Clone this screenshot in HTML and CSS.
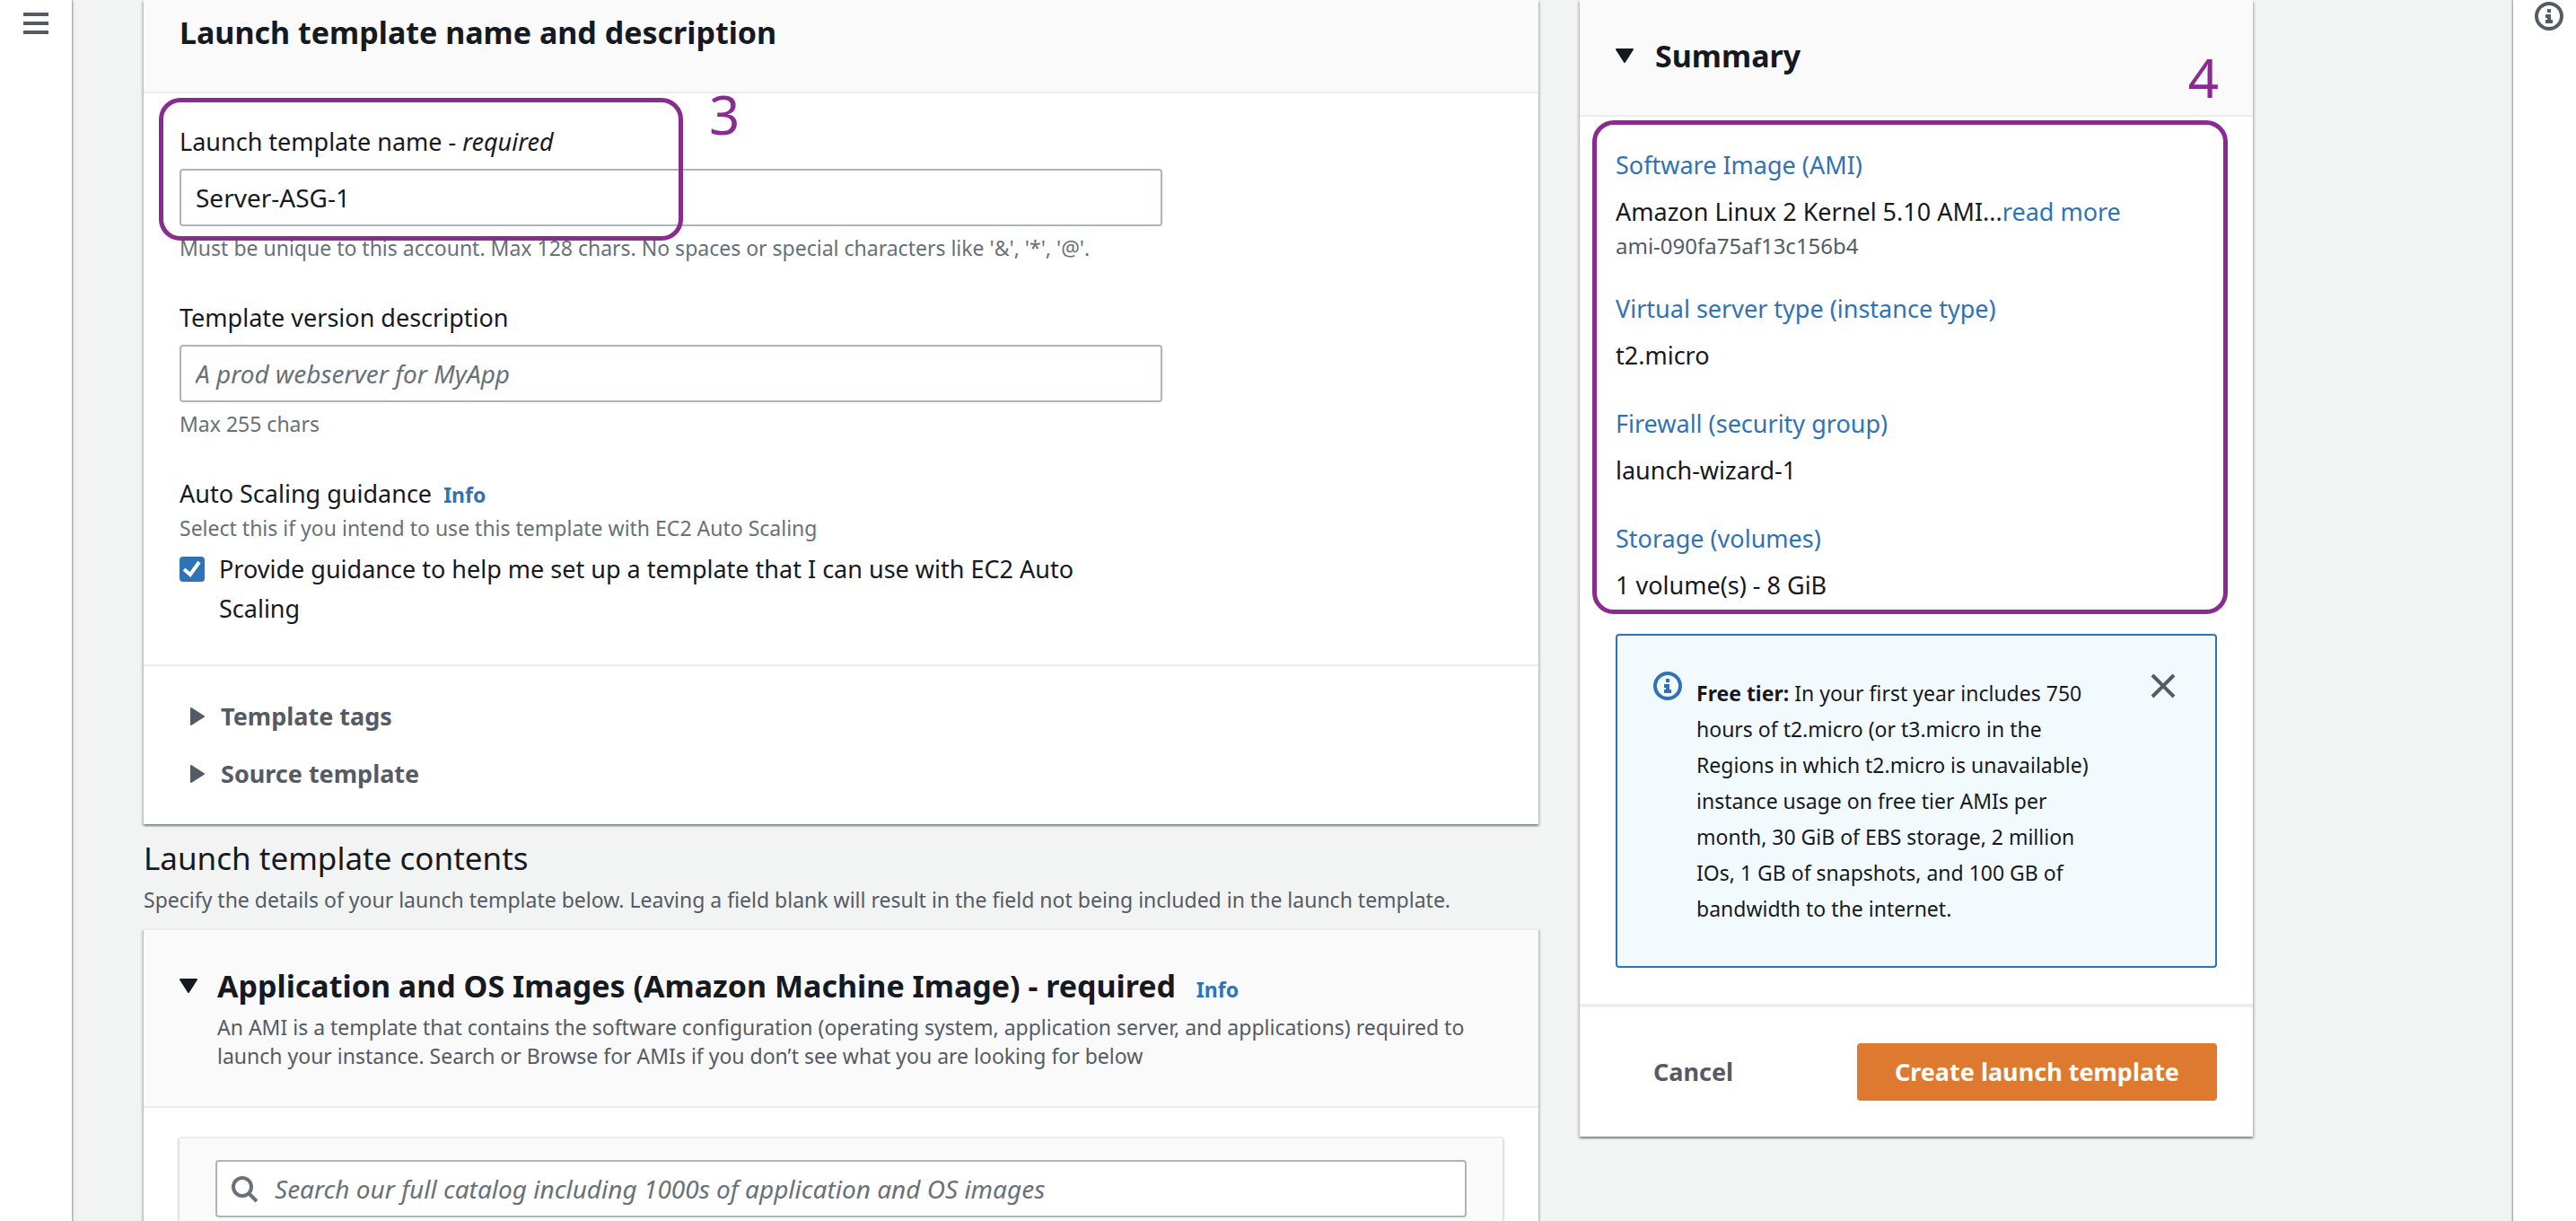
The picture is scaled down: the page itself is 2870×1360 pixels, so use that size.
FILE: index.html
```html
<!DOCTYPE html>
<html lang="en">
<head>
<meta charset="utf-8">
<title>Create launch template</title>
<link rel="stylesheet" href="styles.css">
</head>
<body>
<div class="app">
  <nav class="rail rail-left" aria-label="Navigation">
    <button class="icon-button menu-button" type="button" aria-label="Open navigation">
      <svg width="28" height="24" viewBox="0 0 28 24"><path d="M0 2h28M0 12h28M0 22h28" fill="none" stroke="#545b64" stroke-width="4"/></svg>
    </button>
  </nav>

  <main class="content">
    <div class="column">
      <section class="card card-top name-card">
        <header class="card-header card-header-scrolled">
          <h2 class="title">Launch template name and description</h2>
        </header>
        <div class="card-body form">
          <div class="field">
            <label class="label" for="template-name">Launch template name - <em>required</em></label>
            <input class="input" id="template-name" type="text" value="Server-ASG-1">
            <p class="hint">Must be unique to this account. Max 128 chars. No spaces or special characters like '&amp;', '*', '@'.</p>
          </div>
          <div class="field">
            <label class="label" for="template-desc">Template version description</label>
            <input class="input" id="template-desc" type="text" placeholder="A prod webserver for MyApp">
            <p class="hint">Max 255 chars</p>
          </div>
          <div class="field">
            <div class="label">Auto Scaling guidance <a class="info" href="#">Info</a></div>
            <p class="hint flush">Select this if you intend to use this template with EC2 Auto Scaling</p>
            <label class="check">
              <input class="checkbox" type="checkbox" checked>
              <span>Provide guidance to help me set up a template that I can use with EC2 Auto Scaling</span>
            </label>
          </div>
        </div>
        <div class="expanders">
          <button class="expander" type="button">
            <svg width="16" height="20" viewBox="0 0 16 20"><path d="M1 1v18L15 10z" fill="#545b64" stroke="#545b64" stroke-width="2" stroke-linejoin="round"/></svg>
            Template tags
          </button>
          <button class="expander" type="button">
            <svg width="16" height="20" viewBox="0 0 16 20"><path d="M1 1v18L15 10z" fill="#545b64" stroke="#545b64" stroke-width="2" stroke-linejoin="round"/></svg>
            Source template
          </button>
        </div>
        <div class="mark mark-name"></div>
        <span class="mark-number mark-number-name">3</span>
      </section>

      <div class="section-heading">
        <h2 class="title title-light">Launch template contents</h2>
        <p class="subtitle">Specify the details of your launch template below. Leaving a field blank will result in the field not being included in the launch template.</p>
      </div>

      <section class="card">
        <header class="card-header card-header-toggle">
          <svg class="caret" width="20" height="16" viewBox="0 0 20 16"><path d="M1 1h18L10 15z" fill="#16191f" stroke="#16191f" stroke-width="2" stroke-linejoin="round"/></svg>
          <div class="header-text">
            <h2 class="title">Application and OS Images (Amazon Machine Image) - required <a class="info info-title" href="#">Info</a></h2>
            <p class="subtitle">An AMI is a template that contains the software configuration (operating system, application server, and applications) required to launch your instance. Search or Browse for AMIs if you don’t see what you are looking for below</p>
          </div>
        </header>
        <div class="card-body">
          <div class="search-panel">
            <div class="search">
              <svg class="search-icon" width="30" height="30" viewBox="0 0 30 30"><circle cx="12" cy="12" r="10" fill="none" stroke="#687078" stroke-width="4"/><path d="M19 19l9 9" fill="none" stroke="#687078" stroke-width="4"/></svg>
              <input class="input search-input" type="search" aria-label="Search images" placeholder="Search our full catalog including 1000s of application and OS images">
            </div>
          </div>
        </div>
      </section>
    </div>

    <aside class="column">
      <section class="card card-top">
        <header class="card-header card-header-toggle summary-header">
          <svg class="caret" width="20" height="16" viewBox="0 0 20 16"><path d="M1 1h18L10 15z" fill="#16191f" stroke="#16191f" stroke-width="2" stroke-linejoin="round"/></svg>
          <h2 class="title">Summary</h2>
        </header>
        <div class="card-body summary-body">
          <dl class="summary">
            <div class="summary-item">
              <dt><a href="#">Software Image (AMI)</a></dt>
              <dd>Amazon Linux 2 Kernel 5.10 AMI...<a href="#">read more</a></dd>
              <dd class="summary-id">ami-090fa75af13c156b4</dd>
            </div>
            <div class="summary-item">
              <dt><a href="#">Virtual server type (instance type)</a></dt>
              <dd>t2.micro</dd>
            </div>
            <div class="summary-item">
              <dt><a href="#">Firewall (security group)</a></dt>
              <dd>launch-wizard-1</dd>
            </div>
            <div class="summary-item">
              <dt><a href="#">Storage (volumes)</a></dt>
              <dd>1 volume(s) - 8 GiB</dd>
            </div>
          </dl>
          <div class="alert">
            <svg class="alert-icon" width="32" height="32" viewBox="0 0 32 32"><circle cx="16" cy="16" r="14" fill="none" stroke="#2e73b8" stroke-width="4"/><path d="M14 8h4v4h-4zM12 14h6v6h2v4h-8v-4h2v-2h-2z" fill="#2e73b8"/></svg>
            <p class="alert-text"><b>Free tier:</b> In your first year includes 750 hours of t2.micro (or t3.micro in the Regions in which t2.micro is unavailable) instance usage on free tier AMIs per month, 30 GiB of EBS storage, 2 million IOs, 1 GB of snapshots, and 100 GB of bandwidth to the internet.</p>
            <button class="icon-button" type="button" aria-label="Dismiss">
              <svg width="32" height="32" viewBox="0 0 32 32"><path d="M2 4l24 24M26 4L2 28" fill="none" stroke="#545b64" stroke-width="4"/></svg>
            </button>
          </div>
        </div>
        <footer class="actions">
          <button class="button button-link" type="button">Cancel</button>
          <button class="button button-primary" type="button">Create launch template</button>
        </footer>
        <div class="mark mark-summary"></div>
        <span class="mark-number mark-number-summary">4</span>
      </section>
    </aside>
  </main>

  <aside class="rail rail-right" aria-label="Help">
    <button class="icon-button help-button" type="button" aria-label="Open help">
      <svg width="32" height="32" viewBox="0 0 32 32"><circle cx="16" cy="16" r="14" fill="none" stroke="#545b64" stroke-width="4"/><path d="M14 8h4v4h-4zM12 14h6v6h2v4h-8v-4h2v-2h-2z" fill="#545b64"/></svg>
    </button>
  </aside>
</div>
</body>
</html>
```
FILE: styles.css
```css
* {
  box-sizing: border-box;
}

body {
  margin: 0;
  background: #f2f3f3;
  color: #16191f;
  font-family: "Noto Sans", "Open Sans", sans-serif;
  font-size: 27px;
  line-height: 44px;
}

h2, p, dl, dd {
  margin: 0;
}

svg {
  display: block;
  flex: none;
}

button, input {
  font: inherit;
  color: inherit;
}

a {
  color: #2e73b8;
  text-decoration: none;
}

.app {
  display: grid;
  grid-template-columns: 80px minmax(0, 1fr) 70px;
  height: 100vh;
  overflow: hidden;
}

.rail {
  background: #fff;
}

.rail-left {
  padding: 14px 26px;
  box-shadow: 1px 0 2px #879596;
}

.rail-right {
  padding: 2px 24px;
  box-shadow: -1px 0 2px #879596;
}

.icon-button {
  display: block;
  flex: none;
  align-self: flex-start;
  padding: 0;
  border: 0;
  background: none;
}

.content {
  display: grid;
  grid-template-columns: minmax(0, 1554fr) minmax(0, 750fr);
  gap: 46px;
  align-items: start;
  padding: 0 290px 0 80px;
}

.card {
  position: relative;
  border-top: 2px solid #eaeded;
  background: #fff;
  box-shadow: 0 2px 2px rgba(0, 28, 36, .3), 2px 2px 2px rgba(0, 28, 36, .15), -2px 2px 2px rgba(0, 28, 36, .15);
}

.card-top {
  border-top: 0;
}

.card-header {
  padding: 40px;
  border-bottom: 2px solid #eaeded;
  background: #fafafa;
}

.card-header-scrolled {
  padding: 14px 40px 44px;
}

.card-header-toggle {
  display: flex;
  gap: 22px;
}

.summary-header {
  gap: 24px;
  padding-bottom: 44px;
}

.caret {
  margin-top: 14px;
}

.title {
  font-size: 34px;
  font-weight: 700;
  line-height: 44px;
}

.title-light {
  font-size: 35px;
  font-weight: 400;
}

.subtitle {
  margin-top: 8px;
  color: #545b64;
  font-size: 23px;
  line-height: 32px;
}

.info {
  margin-left: 6px;
  font-size: 23px;
  font-weight: 700;
  line-height: 32px;
}

.info-title {
  margin-left: 14px;
}

.card-body {
  padding: 32px 40px 40px;
}

.form {
  display: grid;
  gap: 40px;
}

.field {
  max-width: 1095px;
}

.label {
  display: block;
}

.input {
  display: block;
  width: 100%;
  height: 64px;
  margin-top: 8px;
  padding: 0 16px;
  border: 2px solid #aab7b8;
  border-radius: 4px;
  background: #fff;
  font-size: 28px;
}

.input::placeholder {
  color: #687078;
  font-style: italic;
  opacity: 1;
}

.hint {
  margin-top: 8px;
  color: #687078;
  font-size: 23px;
  line-height: 32px;
}

.flush {
  margin-top: 0;
}

.check {
  display: flex;
  gap: 16px;
  margin-top: 8px;
  padding-right: 40px;
}

.checkbox {
  flex: none;
  width: 28px;
  height: 28px;
  margin: 8px 0 0;
  border-radius: 4px;
  appearance: none;
  background: #2e73b8 url("data:image/svg+xml,%3Csvg xmlns='http://www.w3.org/2000/svg' viewBox='0 0 28 28'%3E%3Cpath d='M5 14l7 6L22 6' fill='none' stroke='white' stroke-width='4'/%3E%3C/svg%3E");
}

.expanders {
  padding: 24px 40px;
  border-top: 2px solid #eaeded;
}

.expander {
  display: flex;
  align-items: center;
  gap: 18px;
  height: 64px;
  padding: 0 12px;
  border: 0;
  background: none;
  color: #545b64;
  font-weight: 700;
}

.section-heading {
  padding: 16px 0;
}

.search-panel {
  padding: 24px 40px 40px;
  border-top: 2px solid #eaeded;
  background: #fafafa;
  box-shadow: 2px 2px 2px rgba(0, 28, 36, .15), -2px 2px 2px rgba(0, 28, 36, .15);
}

.search {
  position: relative;
}

.search-icon {
  position: absolute;
  top: 18px;
  left: 18px;
}

.search-input {
  margin-top: 0;
  padding-left: 64px;
  appearance: none;
}

.summary {
  display: grid;
  gap: 32px;
}

.summary-item dt {
  margin-bottom: 8px;
}

.summary-item .summary-id {
  color: #545b64;
  font-size: 24px;
  line-height: 32px;
}

.alert {
  display: flex;
  gap: 16px;
  margin-top: 32px;
  padding: 40px;
  border: 2px solid #2e73b8;
  border-radius: 4px;
  background: #f3fafe;
}

.alert-text {
  flex: 1;
  padding: 4px 40px 4px 0;
  font-size: 23px;
  line-height: 40px;
}

.actions {
  display: flex;
  justify-content: space-between;
  padding: 40px;
  border-top: 4px solid #eaeded;
}

.button {
  height: 64px;
  padding: 0 42px;
  border: 0;
  border-radius: 4px;
  background: none;
  font-weight: 700;
}

.button-link {
  color: #545b64;
}

.button-primary {
  background: #de7a30;
  color: #fff;
}

.mark {
  position: absolute;
  border: 5px solid #8a2b8f;
  border-radius: 24px;
  pointer-events: none;
}

.mark-name {
  top: 109px;
  left: 17px;
  width: 584px;
  height: 159px;
}

.mark-summary {
  top: 134px;
  right: 28px;
  left: 14px;
  height: 550px;
}

.mark-number {
  position: absolute;
  color: #8a2b8f;
  font-size: 60px;
  font-weight: 400;
  line-height: 60px;
}

.mark-number-name {
  top: 97px;
  left: 630px;
}

.mark-number-summary {
  top: 56px;
  right: 38px;
}
```
